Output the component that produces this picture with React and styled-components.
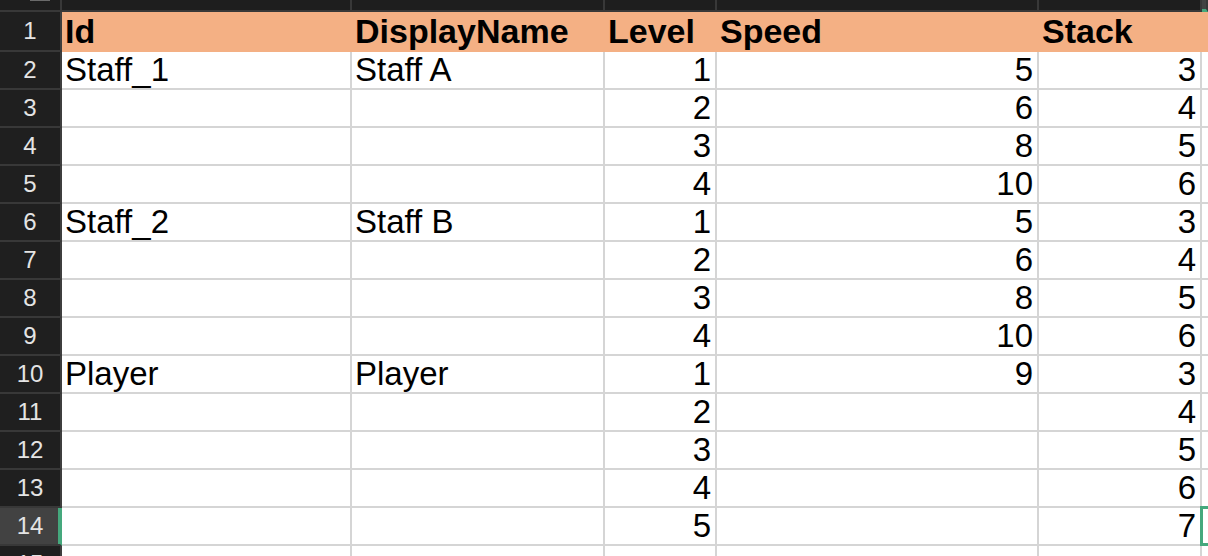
import React from 'react';
import styled, { createGlobalStyle } from 'styled-components';

const GlobalStyle = createGlobalStyle`
    html, body {
        margin : 0;
        padding : 0;
        background : #ffffff;
        overflow : hidden;
    }
    body {
        font-family : "Liberation Sans", Arial, sans-serif;
    }
`;

const COLUMNS = '62px 290px 253px 112px 322px 163px 1fr';
const GREEN = '#45a87d';

const Sheet = styled.div`
    width : 1208px;
    height : 556px;
    overflow : hidden;
`;

const Line = styled.div`
    display : grid;
    grid-template-columns : ${COLUMNS};
`;

const TopHead = styled.div`
    position : relative;
    height : 10px;
    background : ${props => props.selected ? '#434343' : '#1e1e1e'};
    border-bottom : 2px solid ${props => props.selected ? GREEN : '#383838'};
    border-right : 2px solid #383838;
    box-sizing : content-box;
    ${props => props.selected && 'border-bottom-width : 3px; height : 9px;'}
`;

const Corner = styled(TopHead)`
    &::after {
        content : '';
        position : absolute;
        left : 30px;
        top : 0;
        width : 20px;
        height : 1px;
        background : #6a6a6a;
    }
`;

const RowHead = styled.div`
    position : relative;
    height : ${props => props.height}px;
    line-height : ${props => props.height}px;
    background : ${props => props.selected ? '#424242' : '#1f1f1f'};
    color : #e4e4e4;
    font-size : 24px;
    text-align : center;
    border-bottom : 2px solid #383838;
    border-right : 2px solid ${props => props.selected ? GREEN : '#3e3e3e'};
    ${props => props.selected && `box-shadow : inset -2px 0 0 ${GREEN};`}
`;

const Cell = styled.div`
    position : relative;
    height : ${props => props.height}px;
    line-height : ${props => props.height}px;
    padding : 0 4px 0 3px;
    font-size : ${props => props.head ? 34 : 33}px;
    font-weight : ${props => props.head ? 700 : 400};
    color : #000000;
    text-align : ${props => props.num ? 'right' : 'left'};
    white-space : nowrap;
    overflow : hidden;
    background : ${props => props.head ? '#f4b084' : '#ffffff'};
    border-right : 2px solid ${props => props.head ? '#f4b084' : '#d5d5d5'};
    border-bottom : 2px solid ${props => props.head ? '#f4b084' : '#d5d5d5'};
`;

const LastCell = styled(Cell)`
    overflow : visible;
`;

const Selection = styled.div`
    position : absolute;
    left : -2px;
    top : -2px;
    bottom : -2px;
    width : 40px;
    border : 3px solid ${GREEN};
    border-right : none;
`;

const headers = ['Id', 'DisplayName', 'Level', 'Speed', 'Stack'];
const numeric = [false, false, true, true, true];

const rows = [
    ['Staff_1', 'Staff A', 1, 5, 3],
    ['', '', 2, 6, 4],
    ['', '', 3, 8, 5],
    ['', '', 4, 10, 6],
    ['Staff_2', 'Staff B', 1, 5, 3],
    ['', '', 2, 6, 4],
    ['', '', 3, 8, 5],
    ['', '', 4, 10, 6],
    ['Player', 'Player', 1, 9, 3],
    ['', '', 2, '', 4],
    ['', '', 3, '', 5],
    ['', '', 4, '', 6],
    ['', '', 5, '', 7],
    ['', '', '', '', ''],
];

const SELECTED_ROW = 14;

const App = () => {
    return <>
        <GlobalStyle />
        <Sheet>
            <Line>
                <Corner />
                {headers.map((h, i) => <TopHead key={i} />)}
                <TopHead selected />
            </Line>
            <Line>
                <RowHead height={38}>1</RowHead>
                {headers.map((h, i) =>
                    <Cell key={i} head height={38}>{h}</Cell>
                )}
                <LastCell head height={38} />
            </Line>
            {rows.map((row, r) => {
                const n = r + 2;
                const selected = n === SELECTED_ROW;
                return <Line key={n}>
                    <RowHead height={36} selected={selected}>{n}</RowHead>
                    {row.map((v, i) =>
                        <Cell key={i} num={numeric[i]} height={36}>{v}</Cell>
                    )}
                    <LastCell height={36}>
                        {selected && <Selection />}
                    </LastCell>
                </Line>
            })}
        </Sheet>
    </>
}

export default App;
